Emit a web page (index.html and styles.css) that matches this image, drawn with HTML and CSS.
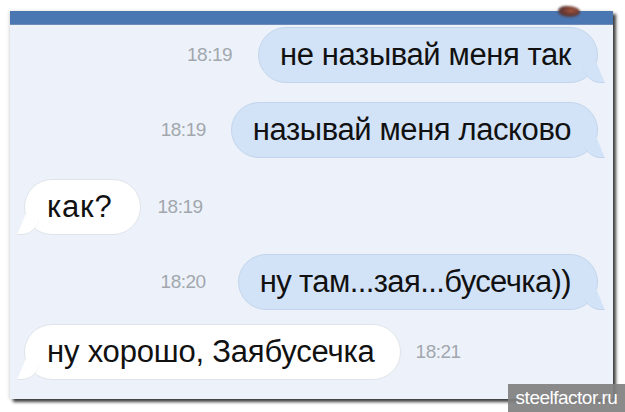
FILE: index.html
```html
<!DOCTYPE html>
<html lang="ru">
<head>
<meta charset="utf-8">
<link rel="stylesheet" href="styles.css">
</head>
<body>
<div class="frame">
  <div class="topbar"><span class="avatar"></span></div>
  <div class="chat">
    <div class="row out r1">
      <span class="time">18:19</span>
      <div class="bubble">не называй меня так</div>
    </div>
    <div class="row out r2">
      <span class="time">18:19</span>
      <div class="bubble">называй меня ласково</div>
    </div>
    <div class="row in r3">
      <div class="bubble">как?</div>
      <span class="time">18:19</span>
    </div>
    <div class="row out r4">
      <span class="time">18:20</span>
      <div class="bubble">ну там...зая...бусечка))</div>
    </div>
    <div class="row in r5">
      <div class="bubble">ну хорошо, Заябусечка</div>
      <span class="time">18:21</span>
    </div>
  </div>
</div>
<div class="watermark">steelfactor.ru</div>
</body>
</html>
```
FILE: styles.css
```css
html, body {
  margin: 0;
  padding: 0;
  background: #ffffff;
  width: 625px;
  height: 412px;
  overflow: hidden;
  font-family: "Liberation Sans", Arial, sans-serif;
}
body { position: relative; }

.frame {
  margin: 11px 0 0 10px;
  width: 603px;
  height: 388px;
  background: #edf2fa;
  display: flex;
  flex-direction: column;
  box-shadow: 3px 3px 3px rgba(0,0,0,0.75), -1px 0 3px rgba(0,0,0,0.15);
}

.topbar {
  height: 13px;
  background: #4a76b1;
  border-bottom: 1px solid #6d8db8;
  display: flex;
  justify-content: flex-end;
  flex-shrink: 0;
}
.avatar {
  width: 22px;
  height: 11px;
  margin-right: 33px;
  margin-top: -5px;
  border-radius: 40% 60% 50% 50%;
  background: radial-gradient(ellipse at 60% 40%, #a5553a 0%, #5e3430 55%, rgba(74,95,134,0.5) 100%);
  filter: blur(1px);
}

.chat {
  flex: 1;
  display: flex;
  flex-direction: column;
  padding: 2px 15px 0 14px;
  gap: 19px;
}

.row {
  display: flex;
  align-items: center;
  height: 56px;
}
.row.out { justify-content: flex-end; }
.row.in { justify-content: flex-start; }

.bubble {
  position: relative;
  height: 56px;
  box-sizing: border-box;
  display: flex;
  align-items: center;
  font-size: 31px;
  color: #111;
  border-radius: 28px;
  letter-spacing: -0.4px;
}
.out .bubble {
  background: #d3e3f7;
  border: 1px solid #c3d5ec;
  padding: 0 26px 0 21px;
}
.in .bubble {
  background: #ffffff;
  border: 1px solid #dfe4ea;
  padding: 0 25px 0 22px;
}
.r3 .bubble { letter-spacing: 0.8px; padding-right: 27px; }
.r4 .bubble { letter-spacing: -0.6px; }
.r5 .bubble { letter-spacing: -0.2px; }

.out .bubble::after {
  content: "";
  position: absolute;
  right: -8px;
  bottom: -1px;
  width: 22px;
  height: 20px;
  background: #d3e3f7;
  border-bottom: 1px solid #c3d5ec;
  border-radius: 0 0 0 18px;
  clip-path: polygon(0 0, 60% 0, 100% 100%, 0 100%);
}
.in .bubble::after {
  content: "";
  position: absolute;
  left: -8px;
  bottom: -1px;
  width: 22px;
  height: 20px;
  background: #ffffff;
  border-bottom: 1px solid #dfe4ea;
  border-radius: 0 0 18px 0;
  clip-path: polygon(40% 0, 100% 0, 100% 100%, 0 100%);
}

.time {
  font-size: 19px;
  color: #a2a7ad;
  letter-spacing: -0.5px;
}
.out .time { margin-right: 26px; }
.in .time { margin-left: 17px; }
.r2 .time { margin-right: 25px; }
.r4 .time { margin-right: 32px; }
.r5 .time { margin-left: 15px; }

.r3 { margin-top: 2px; }
.r5 { margin-top: -5px; }

.watermark {
  position: absolute;
  right: 0;
  bottom: 0;
  width: 117px;
  height: 28px;
  background: rgba(128,128,128,0.92);
  color: #ffffff;
  font-size: 19px;
  display: flex;
  align-items: center;
  justify-content: center;
  letter-spacing: -0.5px;
}
```
